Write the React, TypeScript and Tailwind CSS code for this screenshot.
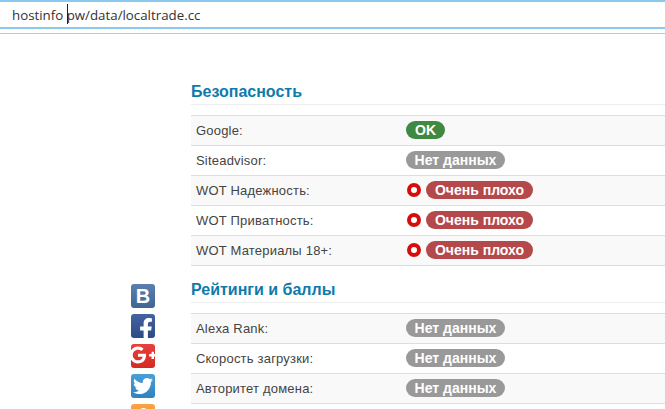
import { ReactNode } from 'react'
import { FaFacebookF, FaGooglePlusG, FaOdnoklassniki, FaTwitter } from 'react-icons/fa'

type Row = { label: string; status: 'ok' | 'none' | 'bad' }

const securityRows: Row[] = [
  { label: 'Google:', status: 'ok' },
  { label: 'Siteadvisor:', status: 'none' },
  { label: 'WOT Надежность:', status: 'bad' },
  { label: 'WOT Приватность:', status: 'bad' },
  { label: 'WOT Материалы 18+:', status: 'bad' },
]

const ratingRows: Row[] = [
  { label: 'Alexa Rank:', status: 'none' },
  { label: 'Скорость загрузки:', status: 'none' },
  { label: 'Авторитет домена:', status: 'none' },
]

function Badge({ status }: { status: Row['status'] }) {
  if (status === 'ok') {
    return <span className="h-[18px] w-[39px] rounded-full bg-[#3f8a43] text-center text-[14px] leading-[18px] font-bold text-white">OK</span>
  }
  if (status === 'none') {
    return <span className="h-[18px] w-[99px] rounded-full bg-[#999999] text-center text-[14px] leading-[18px] font-bold text-white">Нет данных</span>
  }
  return (
    <>
      <span className="mr-[5px] ml-px h-[14px] w-[14px] rounded-full border-[4.5px] border-[#d60d0d] bg-white" />
      <span className="h-[18px] w-[107px] rounded-full bg-[#b5484a] text-center text-[14px] leading-[18px] font-bold text-white">Очень плохо</span>
    </>
  )
}

function Section({ title, rows }: { title: string; rows: Row[] }) {
  return (
    <section>
      <h2 className="h-[23px] border-b border-[#eeeeee] text-[16px] leading-[20px] font-bold text-[#0f7aaa]">{title}</h2>
      <div className="mt-[10px] border-b border-[#dddddd]">
        {rows.map((row, i) => (
          <div
            key={row.label}
            className={`flex h-[30px] items-center border-t border-[#dddddd] ${i % 2 === 0 ? 'bg-[#f9f9f9]' : 'bg-white'}`}
          >
            <div className="w-[215px] pl-[5px] text-[13px] tracking-[0.2px] text-[#444444]">{row.label}</div>
            <div className="mb-px flex items-center">
              <Badge status={row.status} />
            </div>
          </div>
        ))}
      </div>
    </section>
  )
}

function Social({ className, children }: { className: string; children: ReactNode }) {
  return (
    <div className={`flex h-[24px] w-[24px] shrink-0 items-center justify-center overflow-hidden rounded-[3px] text-white ${className}`}>
      {children}
    </div>
  )
}

export default function App() {
  return (
    <div className="h-[409px] w-[665px] overflow-hidden bg-white font-['Liberation_Sans',Arial,sans-serif]">
      {/* address bar */}
      <div className="h-[29px] border-y-2 border-[#8cc8ee] bg-white pl-[12px] font-['Open_Sans',sans-serif] text-[13.3px] leading-[26px] text-[#333333]">
        <span className="relative">
          hostinfo pw/data/localtrade.cc
          <span className="absolute top-[-2px] left-[55px] h-[20px] w-px bg-[#222222]" />
        </span>
      </div>
      <div className="mt-[4px] h-px bg-[#c4c4c4]" />

      <div className="flex pl-[131px]">
        <div className="flex w-[60px] shrink-0 flex-col gap-[6px] pt-[250px]">
          <Social className="bg-linear-to-b from-[#5a80b0] to-[#3f6595]">
            <span className="text-[20px] leading-none font-bold">B</span>
          </Social>
          <Social className="bg-linear-to-b from-[#45639f] to-[#2c4a86]">
            <FaFacebookF className="translate-x-[3px] translate-y-[3px] text-[22px]" />
          </Social>
          <Social className="bg-linear-to-b from-[#e8403a] to-[#d42a25]">
            <FaGooglePlusG className="shrink-0 -translate-y-px text-[28px]" />
          </Social>
          <Social className="bg-linear-to-b from-[#4a9fd8] to-[#2f82c0]">
            <FaTwitter className="text-[20px]" />
          </Social>
          <Social className="bg-linear-to-b from-[#f9a445] to-[#f08a20]">
            <FaOdnoklassniki className="text-[17px]" />
          </Social>
        </div>

        <div className="flex min-w-0 flex-1 flex-col gap-[14px] pt-[48px]">
          <Section title="Безопасность" rows={securityRows} />
          <Section title="Рейтинги и баллы" rows={ratingRows} />
        </div>
      </div>
    </div>
  )
}
